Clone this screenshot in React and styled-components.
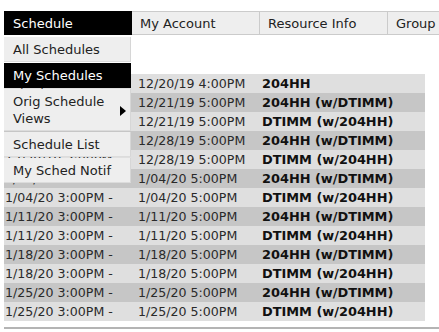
import React from 'react';
import styled, { createGlobalStyle } from 'styled-components';

const GlobalStyle = createGlobalStyle`
    body {
        margin: 0;
        background: #fff;
        font-family: Verdana, 'DejaVu Sans', sans-serif;
        font-size: 12px;
        color: #222;
    }
`;

const Page = styled.div`
    position: relative;
    padding: 11px 0 0 4px;
    width: 435px;
    overflow: hidden;
`;

const TabBar = styled.ul`
    list-style-type: none;
    margin: 0;
    padding: 0;
    display: flex;
    white-space: nowrap;
`;

const Tab = styled.li`
    flex: 0 0 auto;
    box-sizing: border-box;
    width: 128px;
    height: 24px;
    line-height: 23px;
    padding-left: 8px;
    border: 1px solid ${p => (p.active ? '#000' : '#cbcbcb')};
    border-left-width: ${p => (p.active ? '1px' : '0')};
    background: ${p => (p.active ? '#000' : '#eeeeee')};
    color: ${p => (p.active ? '#fff' : '#222')};
    font-size: 13px;
`;

const Menu = styled.ul`
    position: absolute;
    top: 37px;
    left: 4px;
    width: 127px;
    list-style-type: none;
    margin: 0;
    padding: 0;
    z-index: 2;
`;

const MenuItem = styled.li`
    position: relative;
    box-sizing: border-box;
    min-height: 25px;
    padding: 4px ${p => (p.sub ? '14px' : '2px')} 3px 9px;
    line-height: 17px;
    margin-bottom: 1px;
    background: ${p => (p.active ? '#000' : '#eeeeee')};
    color: ${p => (p.active ? '#fff' : '#222')};
    border-right: 1px solid ${p => (p.active ? '#000' : '#d6d6d6')};
    border-bottom: 1px solid ${p => (p.active ? '#000' : '#dcdcdc')};
    font-size: 13px;
    white-space: ${p => (p.sub ? 'normal' : 'nowrap')};
`;

const SubArrow = styled.span`
    position: absolute;
    right: 4px;
    top: 17px;
    width: 0;
    height: 0;
    border-top: 5px solid transparent;
    border-bottom: 5px solid transparent;
    border-left: 6px solid #000;
`;

const Schedule = styled.div`
    margin-top: 39px;
    width: 421px;
`;

const Row = styled.div`
    display: grid;
    grid-template-columns: 133px 124px 1fr;
    height: 19px;
    line-height: 19px;
    background: ${p => (p.dark ? '#c6c6c6' : '#dfdfdf')};
    white-space: nowrap;
`;

const Cell = styled.div`
    padding-left: 1px;
    font-size: 12.6px;
    color: #2a2a2a;
`;

const Who = styled.div`
    padding-left: 1px;
    font-size: 12.9px;
    font-weight: 700;
    color: #111;
`;

const BottomRule = styled.div`
    margin-top: 6px;
    height: 2px;
    background: #b4b4b4;
`;

const rows = [
    ['12/20/19 3:00PM -', '12/20/19 4:00PM', '204HH'],
    ['12/21/19 3:00PM -', '12/21/19 5:00PM', '204HH (w/DTIMM)'],
    ['12/21/19 3:00PM -', '12/21/19 5:00PM', 'DTIMM (w/204HH)'],
    ['12/28/19 3:00PM -', '12/28/19 5:00PM', '204HH (w/DTIMM)'],
    ['12/28/19 3:00PM -', '12/28/19 5:00PM', 'DTIMM (w/204HH)'],
    ['1/04/20 3:00PM -', '1/04/20 5:00PM', '204HH (w/DTIMM)'],
    ['1/04/20 3:00PM -', '1/04/20 5:00PM', 'DTIMM (w/204HH)'],
    ['1/11/20 3:00PM -', '1/11/20 5:00PM', '204HH (w/DTIMM)'],
    ['1/11/20 3:00PM -', '1/11/20 5:00PM', 'DTIMM (w/204HH)'],
    ['1/18/20 3:00PM -', '1/18/20 5:00PM', '204HH (w/DTIMM)'],
    ['1/18/20 3:00PM -', '1/18/20 5:00PM', 'DTIMM (w/204HH)'],
    ['1/25/20 3:00PM -', '1/25/20 5:00PM', '204HH (w/DTIMM)'],
    ['1/25/20 3:00PM -', '1/25/20 5:00PM', 'DTIMM (w/204HH)'],
];

const App = () => {
    return (
        <Page>
            <GlobalStyle />
            <TabBar>
                <Tab active>Schedule</Tab>
                <Tab>My Account</Tab>
                <Tab>Resource Info</Tab>
                <Tab>Group</Tab>
            </TabBar>
            <Menu>
                <MenuItem>All Schedules</MenuItem>
                <MenuItem active>My Schedules</MenuItem>
                <MenuItem sub>
                    Orig Schedule Views
                    <SubArrow />
                </MenuItem>
                <MenuItem>Schedule List</MenuItem>
                <MenuItem>My Sched Notif</MenuItem>
            </Menu>
            <Schedule>
                {rows.map((r, i) => (
                    <Row key={i} dark={i % 2 === 1}>
                        <Cell>{r[0]}</Cell>
                        <Cell>{r[1]}</Cell>
                        <Who>{r[2]}</Who>
                    </Row>
                ))}
            </Schedule>
            <BottomRule />
        </Page>
    );
};

export default App;
